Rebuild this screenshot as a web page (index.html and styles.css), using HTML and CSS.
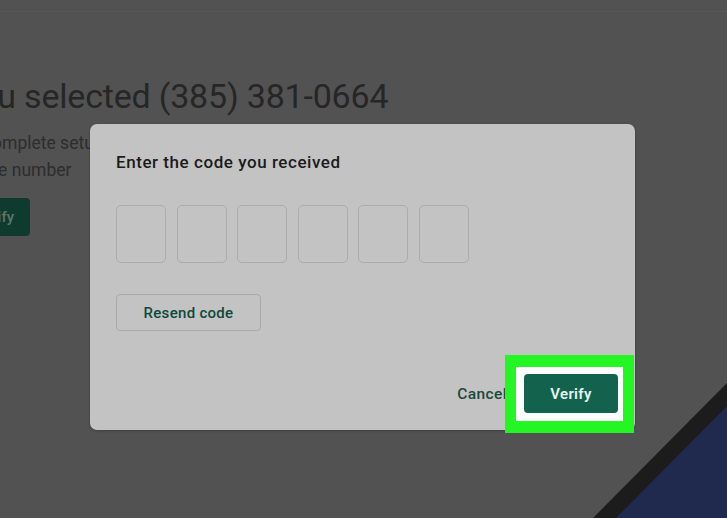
FILE: index.html
```html
<!DOCTYPE html>
<html lang="en">
<head>
<meta charset="utf-8">
<title>Verify phone</title>
<link rel="stylesheet" href="styles.css">
</head>
<body>
<div class="screen">
  <div class="topbar"></div>
  <main class="page">
    <h1 class="title">You selected (385) 381-0664</h1>
    <p class="sub">To complete setup, verify the<br>phone number</p>
    <button class="bg-btn">Verify</button>
  </main>

  <div class="dialog" role="dialog">
    <h2 class="dlg-title">Enter the code you received</h2>
    <div class="code">
      <span class="cell"></span>
      <span class="cell"></span>
      <span class="cell"></span>
      <span class="cell"></span>
      <span class="cell"></span>
      <span class="cell"></span>
    </div>
    <div class="resend-row"><button class="resend">Resend code</button></div>
    <div class="footer">
      <button class="cancel">Cancel</button>
      <span class="highlight"><button class="verify">Verify</button></span>
    </div>
  </div>

  <div class="device-edge"></div>
  <div class="device-screen"></div>
</div>
</body>
</html>
```

FILE: styles.css
```css
* { box-sizing: border-box; }
html, body { margin: 0; padding: 0; }
body {
  background: #525252;
  font-family: Roboto, "Noto Sans", Arial, sans-serif;
  width: 727px;
  height: 518px;
  overflow: hidden;
}
.screen {
  position: relative;
  width: 727px;
  height: 518px;
  overflow: hidden;
}
.topbar {
  height: 12px;
  border-bottom: 1px solid #575757;
}
.page {
  margin-left: -41px;
  padding-top: 64px;
}
.title {
  margin: 0;
  font-size: 34px;
  line-height: 40px;
  font-weight: 400;
  color: #262626;
  letter-spacing: -0.2px;
  white-space: nowrap;
}
.sub {
  margin: 14px 0 0;
  font-size: 17.5px;
  line-height: 27px;
  color: #2d2d2d;
  white-space: nowrap;
}
.bg-btn {
  margin-top: 14px;
  width: 71px;
  height: 38px;
  border: 0;
  border-radius: 4px;
  background: #0f3b2f;
  color: #5a786e;
  font-family: inherit;
  font-size: 15px;
  font-weight: 500;
}

.dialog {
  position: absolute;
  left: 90px;
  top: 124px;
  width: 545px;
  height: 306px;
  background: #c3c3c3;
  border-radius: 7px;
  box-shadow: 0 1px 3px rgba(0,0,0,0.25);
  padding: 26px 1px 0 26px;
  display: flex;
  flex-direction: column;
}
.dlg-title {
  margin: 0;
  font-size: 17px;
  line-height: 24px;
  font-weight: 500;
  color: #1b1b1b;
  letter-spacing: 0.55px;
}
.code {
  display: flex;
  gap: 10.6px;
  margin-top: 31px;
}
.cell {
  width: 50px;
  height: 58px;
  border: 1.5px solid #acacac;
  border-radius: 5px;
}
.resend-row { margin-top: 31px; }
.resend {
  width: 145px;
  height: 37px;
  background: transparent;
  border: 1px solid #a9a9a9;
  border-radius: 4px;
  font-family: inherit;
  font-size: 15px;
  font-weight: 500;
  color: #0d4a3a;
  letter-spacing: 0.3px;
}
.footer {
  margin-top: auto;
  margin-bottom: -3px;
  display: flex;
  justify-content: flex-end;
  align-items: center;
}
.cancel {
  background: none;
  border: 0;
  padding: 0;
  font-family: inherit;
  font-size: 15.5px;
  font-weight: 500;
  color: #1a4a3c;
  letter-spacing: 0.4px;
}
.highlight {
  position: relative;
  z-index: 1;
  margin-left: -2px;
  display: flex;
  border: 11px solid #24f524;
  border-top-width: 12px;
  border-bottom-width: 12px;
  background: #fdfdfd;
  padding: 7px 5px 8px 8px;
}
.verify {
  width: 94px;
  height: 39px;
  border: 0;
  border-radius: 4px;
  background: #12624e;
  color: #e6f4ee;
  font-family: inherit;
  font-size: 15px;
  font-weight: 600;
  letter-spacing: 0.3px;
}

.device-edge {
  position: absolute;
  inset: 0;
  background: #1c1c1c;
  clip-path: polygon(593px 518px, 727px 383px, 727px 518px);
}
.device-screen {
  position: absolute;
  inset: 0;
  background: #1f2a4e;
  clip-path: polygon(616px 518px, 727px 406px, 727px 518px);
}
```
